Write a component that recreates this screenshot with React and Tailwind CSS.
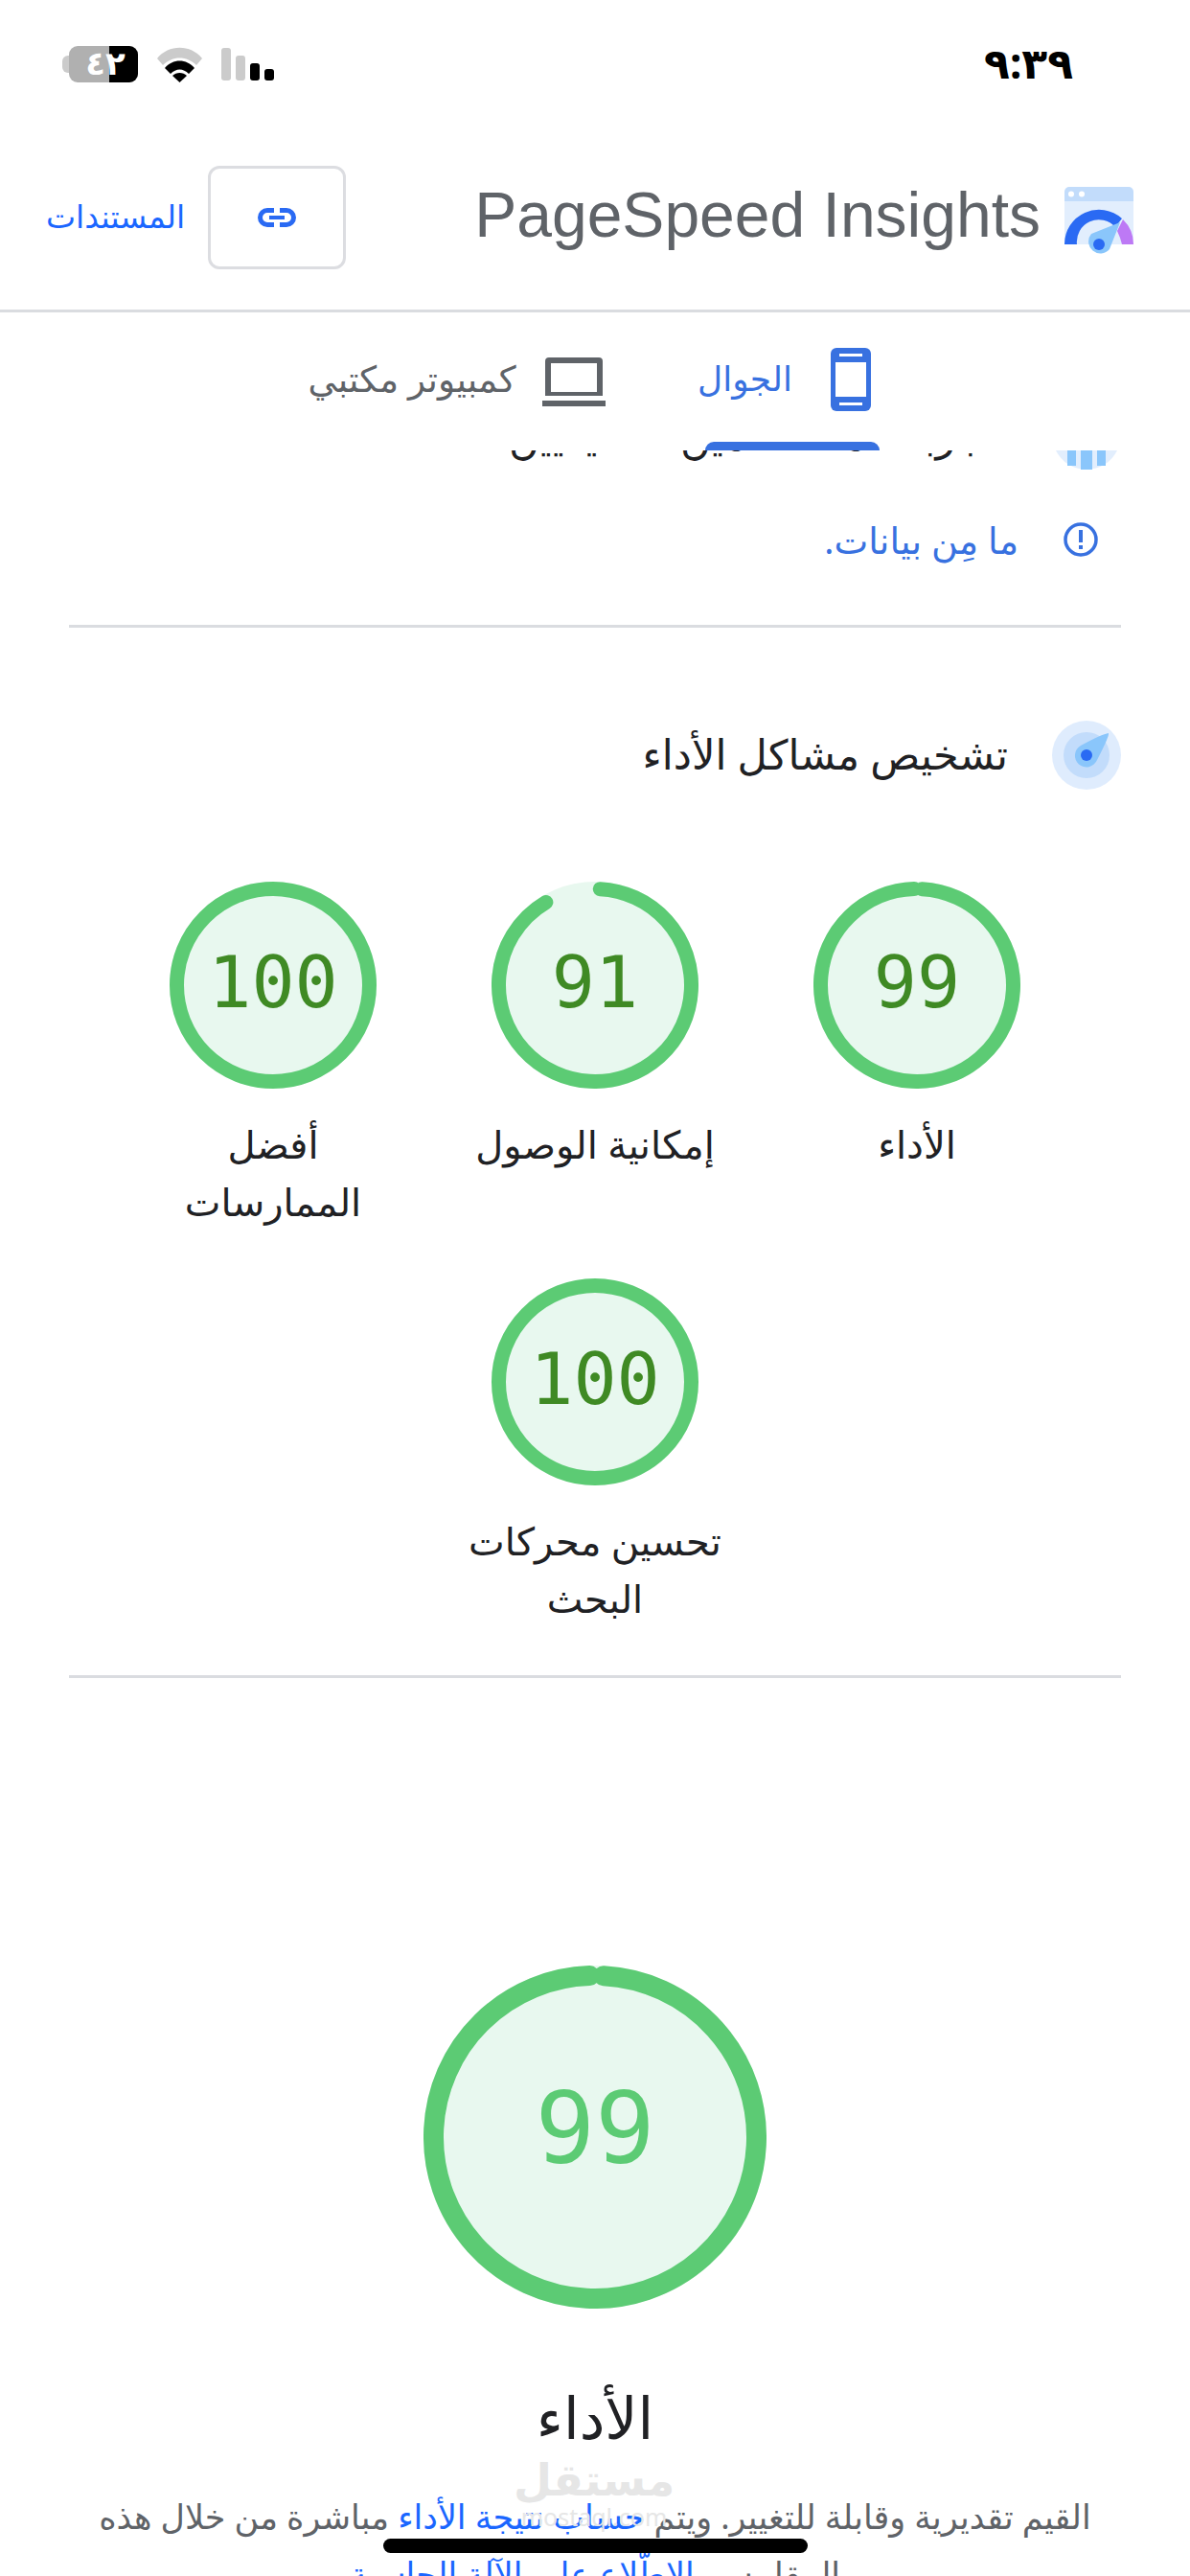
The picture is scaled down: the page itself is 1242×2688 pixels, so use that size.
const AR = "font-['Noto_Sans','DejaVu_Sans',sans-serif]";

function Gauge({ score, size = 216, stroke = 15, textClass }) {
  const r = (size - stroke) / 2;
  const c = 2 * Math.PI * r;
  return (
    <div className="relative" style={{ width: size, height: size }}>
      <svg width={size} height={size} className="block -rotate-90">
        <circle cx={size / 2} cy={size / 2} r={size / 2} fill="#e8f8ef" />
        <circle
          cx={size / 2}
          cy={size / 2}
          r={r}
          fill="none"
          stroke="#5ccb74"
          strokeWidth={stroke}
          strokeLinecap="round"
          strokeDasharray={`${(score / 100) * c - (score < 100 ? stroke * 0.2 : 0)} ${c}`}
          transform={score < 100 ? `rotate(3 ${size / 2} ${size / 2})` : undefined}
        />
      </svg>
      <div className={`absolute inset-0 flex items-center justify-center font-['DejaVu_Sans_Mono',monospace] ${textClass}`} dir="ltr">
        {score}
      </div>
    </div>
  );
}

function ScoreItem({ score, label }) {
  return (
    <div className="flex w-[336px] flex-col items-center">
      <Gauge score={score} textClass="pb-[6px] text-[75px] leading-none text-[#3f8a24]" />
      <div className="mt-[28px] w-[270px] text-center text-[40px] leading-[60px] text-[#202124]">{label}</div>
    </div>
  );
}

function Logo() {
  return (
    <svg width="72" height="72" viewBox="0 0 72 72" className="mt-[8px] shrink-0">
      <path d="M0 5a5 5 0 0 1 5-5h62a5 5 0 0 1 5 5v10H0z" fill="#c2dcfb" />
      <rect y="15" width="72" height="45" fill="#e2eefd" />
      <circle cx="7" cy="7.5" r="3" fill="#fff" />
      <circle cx="18" cy="7.5" r="3" fill="#fff" />
      <path d="M0 60A36 36 0 0 1 60 33L53 42A23 23 0 0 0 13 60z" fill="#2a6af3" />
      <path d="M61 34A36 36 0 0 1 72 60H60Q58 52 55 46z" fill="#bd79f5" />
      <path d="M58 37 47 65A12 12 0 1 1 28 49z" fill="#8ac6fb" />
      <circle cx="36" cy="60" r="6" fill="#2a6af3" />
    </svg>
  );
}

export default function App() {
  return (
    <div dir="rtl" className={`relative h-[2688px] w-[1242px] overflow-hidden bg-white ${AR}`}>
      {/* status bar */}
      <div className="flex h-[130px] items-start justify-between pr-[122px] pl-[65px] pt-[48px]">
        <div className="-mt-[3px] text-[44px] leading-[40px] font-bold text-black">٩:٣٩</div>
        <div dir="ltr" className="flex items-start gap-[20px]">
          <div className="flex items-center">
            <div className="h-[18px] w-[7px] rounded-l-[6px] bg-[#cbcbcb]" />
            <div className="relative flex h-[38px] w-[72px] overflow-hidden rounded-[9px] bg-[#b0b0b0]">
              <div className="absolute inset-y-0 right-0 w-[30px] bg-black" />
              <span className="relative w-full pl-[4px] text-center text-[34px] leading-[34px] font-bold text-white">٤٢</span>
            </div>
          </div>
          <svg width="47" height="37" viewBox="0 0 47 37" className="mt-[1px]">
            <path d="M0 12C12-3 35-3 47 12L41 19C31 9 16 9 6 19z" fill="#cbcbcb" />
            <path d="M8 22C16 12 31 12 39 22L33 28C27 22 20 22 14 28z" fill="#000" />
            <path d="M16 30C20 26 27 26 31 30L23.5 37z" fill="#000" />
          </svg>
          <div className="mt-[2px] flex h-[34px] items-end gap-[5px]">
            <div className="h-[34px] w-[10px] rounded-[3px] bg-[#cbcbcb]" />
            <div className="h-[26px] w-[10px] rounded-[3px] bg-[#cbcbcb]" />
            <div className="h-[18px] w-[10px] rounded-[3px] bg-black" />
            <div className="h-[12px] w-[10px] rounded-[3px] bg-black" />
          </div>
        </div>
      </div>

      {/* header */}
      <div className="flex h-[196px] items-center justify-between border-b-[3px] border-[#dadce0] pr-[59px] pl-[48px]">
        <div className="flex items-center gap-[25px]">
          <Logo />
          <div dir="ltr" className="-mt-[6px] font-['Liberation_Sans',sans-serif] text-[66px] leading-none text-[#5f6368]">PageSpeed Insights</div>
        </div>
        <div className="flex items-center gap-[24px]">
          <div className="flex h-[108px] w-[144px] items-center justify-center rounded-[12px] border-[3px] border-[#dcdde1]">
            <svg width="40" height="20" viewBox="0 0 40 20" fill="none" stroke="#2a6af3" strokeWidth="5">
              <path d="M17 2.5h-7a7.500 7.500 0 0 0 0 15h7M23 2.500h7a7.500 7.500 0 0 1 0 15h-7" />
              <path d="M12 10h16" strokeWidth="4" />
            </svg>
          </div>
          <div className="-mt-[2px] text-[33px] text-[#1a66ff]">المستندات</div>
        </div>
      </div>

      {/* tabs */}
      <div className="relative flex h-[144px] justify-center gap-[97px] pt-[37px] pr-[12px]">
        <div className="relative flex h-[107px] w-[180px] items-start justify-center gap-[40px]">
          <svg width="42" height="66" viewBox="0 0 42 66" className="shrink-0">
            <rect width="42" height="66" rx="6" fill="#3871e0" />
            <rect x="5" y="15" width="32" height="36" fill="#fff" />
            <rect x="9" y="6" width="24" height="3" fill="#fff" />
            <rect x="9" y="57" width="24" height="3" fill="#fff" />
          </svg>
          <div className="shrink-0 pt-[7px] text-[36px] leading-[50px] text-[#3871e0]">الجوال</div>
          <div className="absolute bottom-0 right-[-9px] left-[7px] h-[9px] rounded-t-[9px] bg-[#3871e0]" />
        </div>
        <div className="flex items-start gap-[27px] pt-[9px]">
          <svg width="66" height="52" viewBox="0 0 66 52" className="shrink-0">
            <path d="M3 5a4 4 0 0 1 4-4h52a4 4 0 0 1 4 4v36H3z" fill="#5f6368" />
            <rect x="9" y="7" width="48" height="30" fill="#fff" />
            <rect y="46" width="66" height="6" fill="#5f6368" />
          </svg>
          <div className="-mt-[2px] text-[37.500px] leading-[50px] text-[#5f6368]">كمبيوتر مكتبي</div>
        </div>
      </div>

      {/* clipped fragment of the scrolled content */}
      <div className="relative h-[182px] px-[72px]">
        <div className="flex h-[21px] items-start gap-[62px] overflow-hidden pr-[4px]">
          <svg width="64" height="21" viewBox="0 0 64 21" className="shrink-0">
            <path d="M0 0H64A35.600 35.600 0 0 1 0 0z" fill="#e2eefd" />
            <path d="M12 0h9v16h-9zM26 0h12v20h-12zM43 0h9v16h-9z" fill="#8ac6fb" />
          </svg>
          <div className="-mt-[41px] text-[43px] leading-[50px] text-[#202124]">تجربة المستخدمين الحقيقيين</div>
        </div>
        <div className="mt-[47px] flex items-center gap-[47px] pr-[24px]">
          <svg width="36" height="36" viewBox="0 0 36 36" className="shrink-0">
            <circle cx="18" cy="18" r="16" fill="none" stroke="#3871e0" strokeWidth="3.5" />
            <rect x="16" y="8" width="4" height="13" fill="#3871e0" />
            <rect x="16" y="24" width="4" height="4" fill="#3871e0" />
          </svg>
          <div className="text-[38px] leading-[50px] text-[#3871e0]">ما مِن بيانات.</div>
        </div>
      </div>

      <div className="mx-[72px] h-[3px] bg-[#dadce0]" />

      {/* diagnosis section */}
      <div className="px-[72px]">
        <div className="mt-[97px] flex h-[72px] items-center gap-[46px]">
          <svg width="72" height="72" viewBox="0 0 72 72" className="shrink-0">
            <circle cx="36" cy="36" r="36" fill="#dfecfd" />
            <circle cx="36" cy="36" r="24" fill="#c2dcfb" />
            <path d="M59 13Q60 16 47 41A12 12 0 1 1 30 26Q52 14 59 13z" fill="#8ac6fb" />
            <circle cx="36" cy="36" r="6" fill="#2a6af3" />
          </svg>
          <div className="-mt-[2px] text-[43px] leading-[60px] text-[#202124]">تشخيص مشاكل الأداء</div>
        </div>
        <div className="mx-auto mt-[96px] flex w-[1008px] flex-wrap justify-center gap-y-[50px]">
          <ScoreItem score={99} label="الأداء" />
          <ScoreItem score={91} label="إمكانية الوصول" />
          <ScoreItem score={100} label="أفضل الممارسات" />
          <ScoreItem score={100} label="تحسين محركات البحث" />
        </div>
        <div className="mt-[50px] h-[3px] bg-[#dadce0]" />
      </div>

      {/* performance */}
      <div className="flex flex-col items-center px-[72px]">
        <div className="mt-[300px]">
          <Gauge score={99} size={358} stroke={21} textClass="pb-[18px] text-[104px] leading-none text-[#5ccb74]" />
        </div>
        <div className="mt-[78px] text-[60px] leading-[70px] font-medium text-[#202124]">الأداء</div>
        <div className="mt-[39px] w-[1098px] text-center text-[35px] leading-[60px] text-[#5f6368]">
          القيم تقديرية وقابلة للتغيير. ويتم <span className="text-[#1a66ff]">حساب نتيجة الأداء</span> مباشرة من خلال هذه المقاييس. <span className="text-[#1a66ff]">الاطّلاع على الآلة الحاسبة</span>
        </div>
      </div>

      {/* watermark */}
      <div className="pointer-events-none absolute top-[2560px] left-[545px] flex w-[150px] flex-col items-center">
        <div className="text-[46px] leading-[52px] font-bold whitespace-nowrap text-[#e6e6e6]">مستقل</div>
        <div dir="ltr" className="text-[25px] leading-[28px] whitespace-nowrap text-[#e6e6e6]">mostaql.com</div>
      </div>

      {/* home indicator */}
      <div className="absolute top-[2649px] left-[400px] h-[15px] w-[443px] rounded-full bg-black" />
    </div>
  );
}
